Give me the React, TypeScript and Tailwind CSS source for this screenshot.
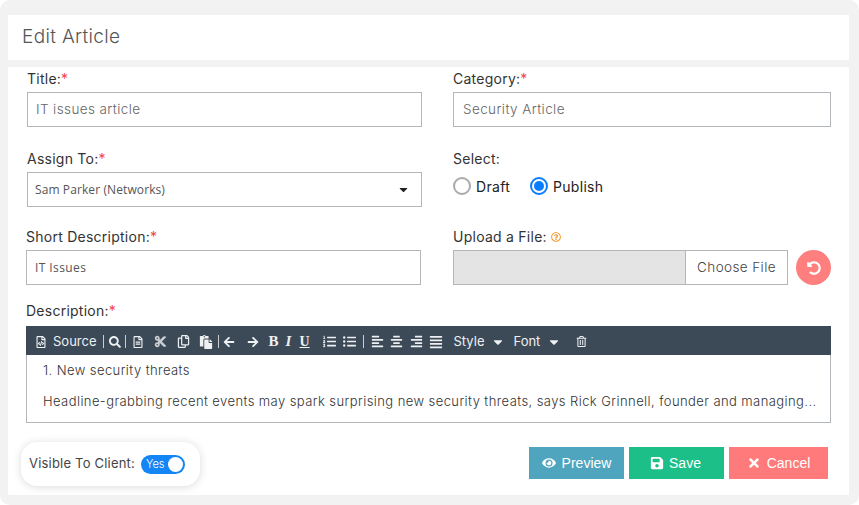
import React from "react";
import {
  FaRegFileCode, FaSearch, FaRegFileAlt, FaCut, FaRegCopy, FaPaste, FaArrowLeft, FaArrowRight,
  FaListOl, FaListUl, FaAlignLeft, FaAlignCenter, FaAlignRight,
  FaAlignJustify, FaRegTrashAlt, FaCaretDown, FaEye, FaSave, FaTimes, FaUndoAlt, FaRegQuestionCircle,
} from "react-icons/fa";

const Req = () => <span className="text-[#ef4444]">*</span>;

function Label({ children }: { children: React.ReactNode }) {
  return <div className="h-5 text-[14px] leading-5 tracking-[0.25px] text-[#333]">{children}</div>;
}

function Box({ children, className = "" }: { children: React.ReactNode; className?: string }) {
  return (
    <div className={`mt-[3px] flex h-[35px] items-center border border-[#b3b6bb] bg-white text-[13.5px] font-light tracking-[0.4px] text-[#666] ${className}`}>
      {children}
    </div>
  );
}

function Sep({ className = "" }: { className?: string }) {
  return <span className={`h-[13px] w-px shrink-0 bg-[#c9ced3] ${className}`} />;
}

function Btn({ children, className }: { children: React.ReactNode; className: string }) {
  return (
    <button className={`flex h-[32px] items-center justify-center font-['Liberation_Sans',sans-serif] text-[14px] text-white ${className}`}>
      {children}
    </button>
  );
}

export default function App() {
  return (
    <div className="h-[505px] w-[859px] bg-white font-['Inter',sans-serif]">
      <div className="flex h-[505px] flex-col rounded-[10px] bg-[#f2f2f2] pb-[10px] pl-[8px] pr-[10px] pt-[15px]">
        <div className="flex h-[45px] items-center bg-white pl-[14px] text-[19px] font-light tracking-[0.35px] text-[#555]">Edit Article</div>
        <div className="mt-[7px] flex flex-1 flex-col bg-white pl-[18px] pr-[18px] pt-[2px]">
          <div className="grid grid-cols-[396px_378px] gap-x-[31px]">
            <div className="pl-[1px]">
              <Label>Title:<Req /></Label>
              <Box className="pl-[8px]">IT issues article</Box>
            </div>
            <div>
              <Label>Category:<Req /></Label>
              <Box className="pl-[9px]">Security Article</Box>
            </div>
            <div className="mt-[22px] pl-[1px]">
              <Label>Assign To:<Req /></Label>
              <Box className="justify-between pl-[7px] pr-[11px]">
                <span className="pt-[1px] font-['Open_Sans',sans-serif] text-[12px] font-normal tracking-[0.1px] text-[#555]">Sam Parker (Networks)</span>
                <FaCaretDown className="text-[13px] text-[#222]" />
              </Box>
            </div>
            <div className="mt-[22px]">
              <Label>Select:</Label>
              <div className="mt-[5px] flex h-[24px] items-center text-[14px] tracking-[0.3px] text-[#222]">
                <span className="h-[18px] w-[18px] rounded-full border-2 border-[#aaa]" />
                <span className="ml-[5px]">Draft</span>
                <span className="ml-[20px] flex h-[18px] w-[18px] items-center justify-center rounded-full border-2 border-[#0a7cff]">
                  <span className="h-[10px] w-[10px] rounded-full bg-[#0a7cff]" />
                </span>
                <span className="ml-[5px]">Publish</span>
              </div>
            </div>
            <div className="mt-[20px] pr-[1px]">
              <Label>Short Description:<Req /></Label>
              <Box className="pl-[8px]"><span className="font-['Open_Sans',sans-serif] text-[12px] font-normal text-[#555]">IT Issues</span></Box>
            </div>
            <div className="mt-[20px]">
              <Label>
                <span className="flex items-center gap-[4px]">Upload a File: <FaRegQuestionCircle className="text-[10px] text-[#f7931e]" /></span>
              </Label>
              <div className="mt-[3px] flex items-center">
                <div className="flex h-[35px] w-[335px] border border-[#b3b6bb] bg-[#e4e4e4]">
                  <div className="flex-1" />
                  <div className="flex w-[102px] items-center justify-center border-l border-[#b3b6bb] bg-white text-[13.5px] font-light tracking-[0.4px] text-[#444]">Choose File</div>
                </div>
                <div className="ml-[8px] flex h-[35px] w-[35px] items-center justify-center rounded-full bg-[#ff7f7f] text-[14px] text-white">
                  <FaUndoAlt />
                </div>
              </div>
            </div>
          </div>

          <div className="mt-[16px] w-[805px]">
            <Label>Description:<Req /></Label>
            <div className="mt-[5px] flex h-[29px] items-center bg-[#3c4a58] pl-[9px] pt-[2px] text-[13px] text-[#eef0f2]">
              <FaRegFileCode className="shrink-0 text-[12px]" />
              <span className="ml-[6px]">Source</span>
              <Sep className="ml-[6px]" />
              <FaSearch className="ml-[5px] shrink-0 text-[12px]" />
              <Sep className="ml-[4px]" />
              <FaRegFileAlt className="ml-[6px] shrink-0 text-[12px]" />
              <FaCut className="ml-[10px] shrink-0 text-[13px] opacity-80" />
              <FaRegCopy className="ml-[10px] shrink-0 text-[13px]" />
              <FaPaste className="ml-[9px] shrink-0 text-[14px]" />
              <Sep className="ml-[5px]" />
              <FaArrowLeft className="ml-[4px] shrink-0 text-[12px]" />
              <FaArrowRight className="ml-[12px] shrink-0 text-[12px]" />
              <span className="ml-[10px] w-[11px] font-['Liberation_Serif',serif] text-[15px] font-bold leading-none">B</span>
              <span className="ml-[6px] w-[8px] font-['Liberation_Serif',serif] text-[15px] font-bold italic leading-none">I</span>
              <span className="ml-[6px] w-[11px] font-['Liberation_Serif',serif] text-[14px] font-bold leading-none underline">U</span>
              <FaListOl className="ml-[12px] shrink-0 text-[13px]" />
              <FaListUl className="ml-[7px] shrink-0 text-[13px]" />
              <Sep className="ml-[7px]" />
              <FaAlignLeft className="ml-[7px] shrink-0 text-[13px]" />
              <FaAlignCenter className="ml-[6px] shrink-0 text-[13px]" />
              <FaAlignRight className="ml-[7px] shrink-0 text-[13px]" />
              <FaAlignJustify className="ml-[6px] shrink-0 text-[14px]" />
              <span className="ml-[11px]">Style</span>
              <FaCaretDown className="ml-[7px] shrink-0 text-[14px]" />
              <span className="ml-[8px]">Font</span>
              <FaCaretDown className="ml-[7px] shrink-0 text-[14px]" />
              <FaRegTrashAlt className="ml-[15px] shrink-0 text-[11px]" />
            </div>
            <div className="h-[68px] border border-t-0 border-[#b3b6bb] pl-[16px] pt-[5px] text-[13px] font-light tracking-[0.42px] text-[#333]">
              <div className="leading-5">1. New security threats</div>
              <div className="mt-[11px] whitespace-nowrap leading-5">Headline-grabbing recent events may spark surprising new security threats, says Rick Grinnell, founder and managing...</div>
            </div>
          </div>

          <div className="mt-[19px] flex items-start justify-between">
            <div className="-ml-[5px] flex h-[44px] w-[179px] items-center rounded-[16px] bg-white pl-[8px] text-[13px] tracking-[0.2px] text-[#444] shadow-[0_1px_8px_rgba(0,0,0,0.15)]">
              Visible To Client:
              <span className="ml-[6px] flex h-[19px] w-[44px] items-center justify-between rounded-full bg-[#1485f5] pl-[5px] pr-[2px] text-[11px] font-light tracking-normal text-white">
                Yes
                <span className="h-[15px] w-[15px] rounded-full bg-white" />
              </span>
            </div>
            <div className="mr-[3px] mt-[5px] flex gap-[5px]">
              <Btn className="w-[95px] gap-[6px] bg-[#4fa5bd]"><FaEye /> Preview</Btn>
              <Btn className="w-[95px] gap-[5px] bg-[#1cbf88] pr-[2px]"><FaSave /> Save</Btn>
              <Btn className="w-[99px] gap-[6px] bg-[#ff7a7a]"><FaTimes /> Cancel</Btn>
            </div>
          </div>
        </div>
      </div>
    </div>
  );
}
